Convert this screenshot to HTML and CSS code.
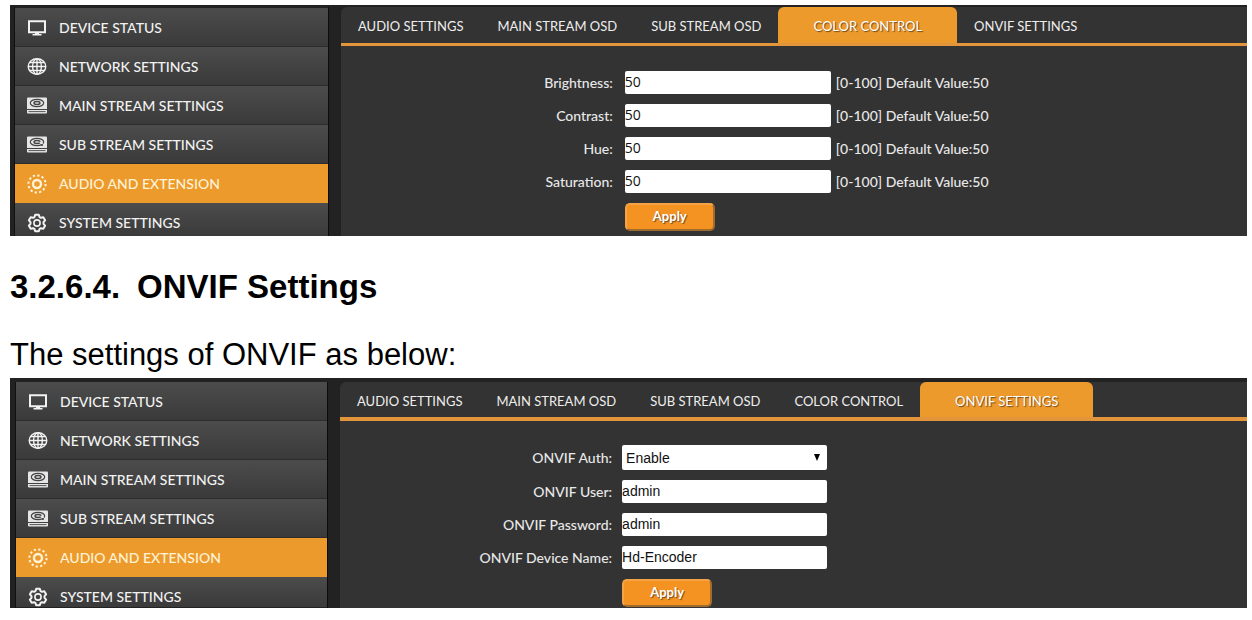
FILE: index.html
```
<!DOCTYPE html>
<html lang="en">
<head>
  <meta charset="UTF-8">
  <title>ONVIF Settings</title>
  <link rel="stylesheet" href="styles.css">
</head>
<body>
  <!-- icons shared by both menus -->
  <svg class="sprite" aria-hidden="true">
    <symbol id="icon-monitor" viewBox="0 0 20 20">
      <path d="M2 3.2h16v11H2z" fill="none" stroke="currentColor" stroke-width="2"/>
      <path d="M8 14.500h4v1.500h2.500v1.500h-9V16H8z" fill="currentColor"/>
    </symbol>
    <symbol id="icon-globe" viewBox="0 0 20 20">
      <g fill="none" stroke="currentColor" stroke-width="1.4">
        <ellipse cx="10" cy="9.500" rx="8.800" ry="7.800"/>
        <ellipse cx="10" cy="9.500" rx="4.400" ry="7.800"/>
        <path d="M10 1.700v15.600M1.200 9.500h17.600M2.600 5.500h14.800M2.600 13.500h14.800"/>
      </g>
    </symbol>
    <symbol id="icon-disk" viewBox="0 0 20 20">
      <path d="M1 1.500h18q1 0 1 1V13H0V2.500q0-1 1-1z" fill="#e6e6e6"/>
      <path d="M0 14h20v2.500q0 1-1 1H1q-1 0-1-1z" fill="#e6e6e6"/>
      <path d="M1.500 15.600h17" stroke="#555" stroke-width="1"/>
      <ellipse cx="10" cy="7" rx="6.700" ry="3.700" fill="none" stroke="#444" stroke-width="1.200"/>
      <ellipse cx="10" cy="7" rx="3" ry="1.500" fill="none" stroke="#444" stroke-width="1.400"/>
    </symbol>
    <symbol id="icon-disk-sub" viewBox="0 0 20 20">
      <use href="#icon-disk"/>
      <path d="M12.500 7l4 2.500" stroke="#e6e6e6" stroke-width="1.400"/>
      <circle cx="15" cy="10" r="1" fill="#444"/>
    </symbol>
    <symbol id="icon-sun" viewBox="0 0 20 20">
      <circle cx="10" cy="10" r="4" fill="none" stroke="currentColor" stroke-width="2.400"/>
      <circle cx="10" cy="10" r="8.600" fill="none" stroke="currentColor" stroke-width="2" stroke-dasharray="2.300 2.203"/>
    </symbol>
    <symbol id="icon-gear" viewBox="0 0 20 20">
      <path d="M8.200 1.800h3.600l.8 2.300 1.300.7 2.400-.5 1.800 3-1.600 1.900v1.600l1.600 1.900-1.800 3-2.400-.5-1.300.7-.8 2.300H8.200l-.8-2.300-1.300-.7-2.400.5-1.800-3 1.600-1.900V9.200L1.900 7.300l1.800-3 2.400.5 1.300-.7z" fill="none" stroke="currentColor" stroke-width="2" stroke-linejoin="round"/>
      <circle cx="10" cy="10" r="3.100" fill="none" stroke="currentColor" stroke-width="1.600"/>
    </symbol>
  </svg>

  <section class="screen">
    <nav class="sidebar">
      <a href="#" class="menu-link"><svg class="icon"><use href="#icon-monitor"/></svg>DEVICE STATUS</a>
      <a href="#" class="menu-link"><svg class="icon"><use href="#icon-globe"/></svg>NETWORK SETTINGS</a>
      <a href="#" class="menu-link"><svg class="icon"><use href="#icon-disk"/></svg>MAIN STREAM SETTINGS</a>
      <a href="#" class="menu-link"><svg class="icon"><use href="#icon-disk-sub"/></svg>SUB STREAM SETTINGS</a>
      <a href="#" class="menu-link active"><svg class="icon"><use href="#icon-sun"/></svg>AUDIO AND EXTENSION</a>
      <a href="#" class="menu-link"><svg class="icon"><use href="#icon-gear"/></svg>SYSTEM SETTINGS</a>
    </nav>
    <div class="main">
      <nav class="tabs">
        <a href="#" class="tab">AUDIO SETTINGS</a>
        <a href="#" class="tab">MAIN STREAM OSD</a>
        <a href="#" class="tab">SUB STREAM OSD</a>
        <a href="#" class="tab active">COLOR CONTROL</a>
        <a href="#" class="tab">ONVIF SETTINGS</a>
      </nav>
      <form class="form">
        <label for="brightness">Brightness:</label>
        <input type="text" id="brightness" value="50">
        <span class="hint">[0-100] Default Value:50</span>
        <label for="contrast">Contrast:</label>
        <input type="text" id="contrast" value="50">
        <span class="hint">[0-100] Default Value:50</span>
        <label for="hue">Hue:</label>
        <input type="text" id="hue" value="50">
        <span class="hint">[0-100] Default Value:50</span>
        <label for="saturation">Saturation:</label>
        <input type="text" id="saturation" value="50">
        <span class="hint">[0-100] Default Value:50</span>
        <button type="button" class="btn-apply">Apply</button>
      </form>
    </div>
  </section>

  <h2><span class="number">3.2.6.4.</span>ONVIF Settings</h2>
  <p>The settings of ONVIF as below:</p>

  <section class="screen screen-onvif">
    <nav class="sidebar">
      <a href="#" class="menu-link"><svg class="icon"><use href="#icon-monitor"/></svg>DEVICE STATUS</a>
      <a href="#" class="menu-link"><svg class="icon"><use href="#icon-globe"/></svg>NETWORK SETTINGS</a>
      <a href="#" class="menu-link"><svg class="icon"><use href="#icon-disk"/></svg>MAIN STREAM SETTINGS</a>
      <a href="#" class="menu-link"><svg class="icon"><use href="#icon-disk-sub"/></svg>SUB STREAM SETTINGS</a>
      <a href="#" class="menu-link active"><svg class="icon"><use href="#icon-sun"/></svg>AUDIO AND EXTENSION</a>
      <a href="#" class="menu-link"><svg class="icon"><use href="#icon-gear"/></svg>SYSTEM SETTINGS</a>
    </nav>
    <div class="main">
      <nav class="tabs">
        <a href="#" class="tab">AUDIO SETTINGS</a>
        <a href="#" class="tab">MAIN STREAM OSD</a>
        <a href="#" class="tab">SUB STREAM OSD</a>
        <a href="#" class="tab">COLOR CONTROL</a>
        <a href="#" class="tab active">ONVIF SETTINGS</a>
      </nav>
      <form class="form">
        <label for="auth">ONVIF Auth:</label>
        <select id="auth">
          <option selected>Enable</option>
          <option>Disable</option>
        </select>
        <label for="user">ONVIF User:</label>
        <input type="text" id="user" value="admin">
        <label for="password">ONVIF Password:</label>
        <input type="text" id="password" value="admin">
        <label for="device-name">ONVIF Device Name:</label>
        <input type="text" id="device-name" value="Hd-Encoder">
        <button type="button" class="btn-apply">Apply</button>
      </form>
    </div>
  </section>
</body>
</html>
```
FILE: styles.css
```
* {
  box-sizing: border-box;
}

body {
  margin: 0;
  padding: 5px 5px 0 10px;
  background: #fff;
  color: #000;
  font-family: "Liberation Sans", Arial, sans-serif;
}

.sprite {
  display: none;
}

h2 {
  margin: 31px 0 0;
  font-size: 33px;
  line-height: 40px;
}

h2 .number {
  margin-right: 17px;
}

p {
  margin: 28px 0 3px;
  font-size: 31px;
  line-height: 40px;
}

.screen {
  display: flex;
  gap: 12px;
  padding: 2px 0 0 4px;
  background: #222;
  color: #e8e8e8;
  font-family: Lato, sans-serif;
}

.sidebar {
  width: 315px;
  padding-top: 1px;
  border-left: 1px solid #111;
  border-right: 1px solid #0c0c0c;
}

.menu-link {
  display: flex;
  align-items: center;
  gap: 12px;
  padding: 10px 12px 8px;
  border-bottom: 1px solid #2c2c2c;
  background: linear-gradient(#4c4c4c, #3a3a3a);
  color: #f2f2f2;
  font-size: 14px;
  font-weight: 500;
  line-height: 20px;
  text-decoration: none;
}

.menu-link.active {
  border-bottom-color: #ed9a2d;
  background: #ed9a2d;
  color: #fff3d6;
}

.menu-link:last-child {
  padding-bottom: 3px;
  border-bottom: none;
}

.icon {
  flex: none;
  width: 20px;
  height: 20px;
}

.main {
  flex: 1;
  background: #333;
  border-top-left-radius: 6px;
}

.tabs {
  display: flex;
  border-bottom: 3px solid #e2953a;
}

.tab {
  padding: 9px 17px 7px;
  color: #eee;
  font-size: 13px;
  line-height: 20px;
  text-decoration: none;
}

.tab.active {
  padding-left: 35px;
  padding-right: 35px;
  border-radius: 6px 6px 0 0;
  background: #ed9a2d;
  color: #fff;
  text-shadow: 1px 1px 1px #6b4a1c;
}

.form {
  display: grid;
  grid-template-columns: 30% 206px 1fr;
  column-gap: 12px;
  row-gap: 10px;
  padding: 25px 0 5px;
  align-items: center;
}

.form label {
  grid-column: 1;
  font-size: 14px;
  font-weight: 500;
  line-height: 20px;
  text-align: right;
}

.form input,
.form select {
  grid-column: 2;
  width: 100%;
  height: 23px;
  padding: 0 0 2px;
  border: none;
  border-radius: 2px;
  background: #fff;
  color: #111;
  font-family: "Open Sans", sans-serif;
  font-size: 14px;
}

.hint {
  grid-column: 3;
  margin-left: -7px;
  font-size: 14px;
  font-weight: 500;
  line-height: 20px;
}

.btn-apply {
  grid-column: 2;
  justify-self: start;
  width: 90px;
  height: 28px;
  padding: 0 6px 2px;
  border: 2px outset #f5a347;
  border-radius: 5px;
  background: #f59322;
  color: #fff;
  font-family: Lato, sans-serif;
  font-size: 13px;
  font-weight: bold;
  text-shadow: 1px 1px 1px #6b4a1c;
}

.screen-onvif {
  padding: 4px 0 0 5px;
}

.screen-onvif .sidebar {
  width: 313px;
  padding-top: 0;
}

.screen-onvif .menu-link:last-child {
  padding-bottom: 0;
}

.screen-onvif .tabs {
  border-bottom-width: 4px;
}

.screen-onvif .tab {
  padding-top: 9px;
  padding-bottom: 6px;
}

.screen-onvif .form {
  grid-template-columns: 30% 205px 1fr;
  column-gap: 10px;
  padding: 24px 0 1px;
}

.screen-onvif input,
.screen-onvif select {
  font-family: "Liberation Sans", Arial, sans-serif;
}

.screen-onvif select {
  height: 25px;
  padding: 0 4px;
  appearance: none;
  background: #fff url("data:image/svg+xml,%3Csvg xmlns='http://www.w3.org/2000/svg' width='6' height='7'%3E%3Cpath d='M0 0h6L3 7z'/%3E%3C/svg%3E") no-repeat right 7px center;
}
```
